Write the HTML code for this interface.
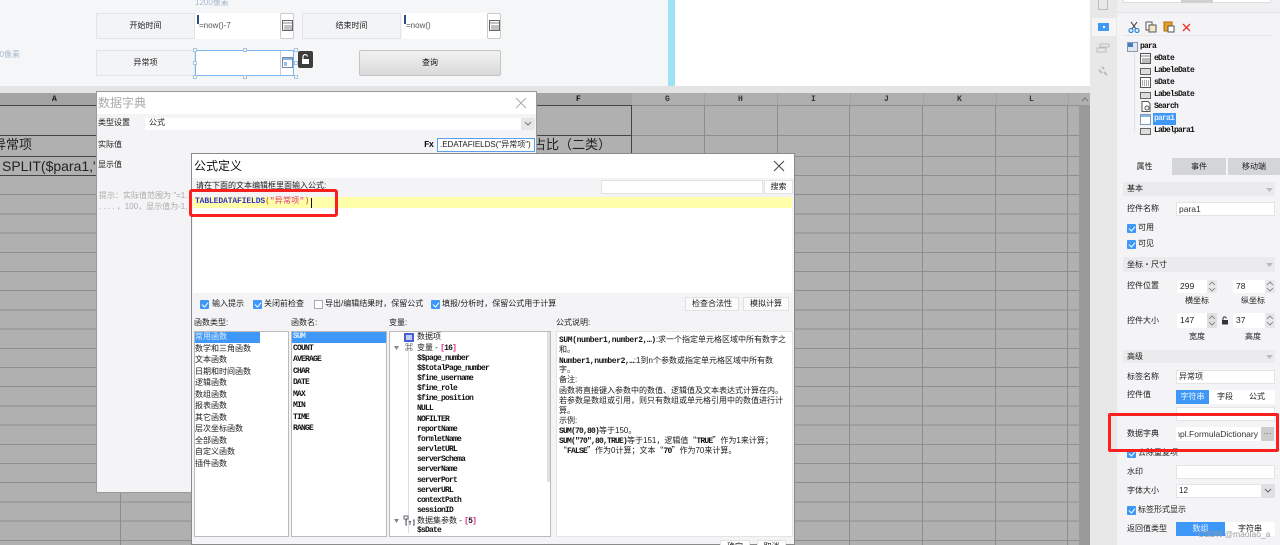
<!DOCTYPE html>
<html lang="zh-CN">
<head>
<meta charset="utf-8">
<title>公式定义</title>
<style>
*{box-sizing:border-box}
html,body{margin:0;padding:0;background:#fff}
#p{position:relative;width:1280px;height:545px;overflow:hidden;font-family:"Liberation Sans","Noto Sans CJK SC",sans-serif;font-size:8px;color:#1c1c1c;filter:blur(.3px)}
#p div,#p svg{position:absolute}
.t{position:absolute;white-space:nowrap;line-height:12px;height:12px}
.m{font-family:"Liberation Mono","Noto Sans CJK SC",monospace;letter-spacing:-.8px;color:#111;font-weight:bold}
.w{letter-spacing:-.4px}
.q{font-family:"Noto Sans CJK SC",sans-serif}
.b{background:#fff}
.lab{background:#f3f4f6;border:1px solid #e2e3e6;text-align:center;line-height:24px}
.sec{left:1123px;width:152px;background:#ebebed;padding-left:4px}
.inp{background:#fff;border:1px solid #e4e4e6;line-height:12px;padding-left:2px}
.cb{width:9px;height:9px;background:#3f98f7;border-radius:1px}
.cb:after{content:"";position:absolute;left:3px;top:1px;width:3px;height:5px;border:solid #fff;border-width:0 1px 1px 0;transform:rotate(40deg)}
.btn{background:#fbfbfb;border:1px solid #e2e2e2;text-align:center;line-height:12px}
.v{top:105px;width:1px;background:#8c8c8c;height:440px}
.hv{top:93px;width:1px;background:#a2a2a2;height:12px}
.h{left:0;height:1px;background:#444}
.lb{width:11px;height:7px;background:#ddd;border:1px solid #666}
</style>
</head>
<body>
<div id="p">
<!-- top design area -->
<div style="left:0;top:0;width:668px;height:86px;background:#f5f6f8"></div>
<div style="left:668px;top:0;width:7px;height:86px;background:#9de3f3"></div>
<div style="left:675px;top:0;width:415px;height:86px;background:#fff"></div>
<div style="left:0;top:86px;width:1090px;height:7px;background:#e4e4e4"></div>
<span class="t" style="left:195px;top:-3px;color:#a9bccd">1200像素</span>
<span class="t" style="left:-5px;top:49px;color:#a9bccd">80像素</span>

<div class="lab" style="left:96px;top:13px;width:99px;height:26px">开始时间</div>
<div class="b" style="left:195px;top:13px;width:85px;height:26px"></div>
<div style="left:197px;top:15px;width:2px;height:9px;background:#2b4f80"></div>
<span class="t" style="left:199px;top:20px;color:#555">=now()-7</span>
<div class="b" style="left:280px;top:13px;width:14px;height:26px;border:1px solid #ccc;border-radius:2px"></div>
<svg style="left:282px;top:20px" width="11" height="11" viewBox="0 0 11 11"><rect x=".5" y=".5" width="10" height="10" fill="#fff" stroke="#666"/><path d="M1 3h9M3 5v5M5 5v5M7 5v5M9 5v5" stroke="#666" stroke-width=".8"/></svg>

<div class="lab" style="left:302px;top:13px;width:99px;height:26px">结束时间</div>
<div class="b" style="left:402px;top:13px;width:85px;height:26px"></div>
<div style="left:404px;top:15px;width:2px;height:9px;background:#2b4f80"></div>
<span class="t" style="left:406px;top:20px;color:#555">=now()</span>
<div class="b" style="left:487px;top:13px;width:14px;height:26px;border:1px solid #ccc;border-radius:2px"></div>
<svg style="left:489px;top:20px" width="11" height="11" viewBox="0 0 11 11"><rect x=".5" y=".5" width="10" height="10" fill="#fff" stroke="#666"/><path d="M1 3h9M3 5v5M5 5v5M7 5v5M9 5v5" stroke="#666" stroke-width=".8"/></svg>

<div class="lab" style="left:96px;top:50px;width:99px;height:26px">异常项</div>
<div class="b" style="left:195px;top:50px;width:99px;height:26px;border:1px solid #7db7f0"></div>
<div style="left:280px;top:51px;width:1px;height:24px;background:#ccc"></div>
<svg style="left:282px;top:57px" width="11" height="11" viewBox="0 0 11 11"><rect x=".5" y=".5" width="10" height="10" fill="#fff" stroke="#6b8cb0"/><rect x="1" y="1" width="9" height="2" fill="#8db4dc"/><rect x="2" y="5" width="3" height="4" fill="#9fc0e0"/></svg>
<div style="left:193px;top:48px;width:4px;height:4px;background:#fff;border:1px solid #a9c4de"></div>
<div style="left:243px;top:48px;width:4px;height:4px;background:#fff;border:1px solid #a9c4de"></div>
<div style="left:294px;top:48px;width:4px;height:4px;background:#fff;border:1px solid #a9c4de"></div>
<div style="left:193px;top:61px;width:4px;height:4px;background:#fff;border:1px solid #a9c4de"></div>
<div style="left:294px;top:61px;width:4px;height:4px;background:#fff;border:1px solid #a9c4de"></div>
<div style="left:193px;top:75px;width:4px;height:4px;background:#fff;border:1px solid #a9c4de"></div>
<div style="left:243px;top:75px;width:4px;height:4px;background:#fff;border:1px solid #a9c4de"></div>
<div style="left:294px;top:75px;width:4px;height:4px;background:#fff;border:1px solid #a9c4de"></div>
<div style="left:298px;top:51px;width:15px;height:17px;background:#3d3d3d;border-radius:2px"></div>
<svg style="left:301px;top:54px" width="9" height="11" viewBox="0 0 9 11"><path d="M2 5V3a2.200 2.200 0 0 1 4.400-.4" fill="none" stroke="#fff" stroke-width="1.200"/><rect x="1" y="5" width="7" height="5" fill="#fff"/></svg>
<div style="left:359px;top:50px;width:142px;height:26px;background:linear-gradient(#f1f1f1,#d9d9d9);border:1px solid #c4c4c4;border-radius:2px;text-align:center;line-height:24px;color:#111">查询</div>

<!-- grid -->
<div style="left:0;top:93px;width:1079px;height:452px;background:#b0b0b0"></div>
<div style="left:0;top:93px;width:631px;height:12px;background:#a4a4a4"></div>
<div style="left:631px;top:93px;width:448px;height:12px;background:#aeaeae"></div>
<div style="left:0;top:175px;width:1079px;height:370px;background:repeating-linear-gradient(to bottom,#8e8e8e 0,#8e8e8e 1px,transparent 1px,transparent 19.2px)"></div>
<div style="left:631px;top:105px;width:448px;height:1px;background:#8e8e8e"></div>
<div style="left:631px;top:135px;width:448px;height:1px;background:#8e8e8e"></div>
<div style="left:631px;top:156px;width:448px;height:1px;background:#8e8e8e"></div>
<div class="h" style="top:105px;width:631px"></div>
<div class="h" style="top:135px;width:631px"></div>
<div class="h" style="top:156px;width:631px"></div>
<div class="h" style="top:175px;width:631px"></div>
<div style="left:631px;top:105px;width:1px;height:70px;background:#444"></div>
<div class="v" style="left:120px;top:175px;height:370px"></div>
<div class="v" style="left:704px"></div><div class="v" style="left:777px"></div><div class="v" style="left:849px"></div><div class="v" style="left:922px"></div><div class="v" style="left:995px"></div><div class="v" style="left:1067px"></div>
<div class="v" style="left:631px;top:175px;height:370px"></div>
<div class="hv" style="left:631px"></div><div class="hv" style="left:704px"></div><div class="hv" style="left:777px"></div><div class="hv" style="left:850px"></div><div class="hv" style="left:923px"></div><div class="hv" style="left:996px"></div><div class="hv" style="left:1068px"></div>
<span class="t m" style="left:52px;top:94px">A</span>
<span class="t m" style="left:576px;top:94px">F</span>
<span class="t m" style="left:665px;top:94px;color:#333">G</span>
<span class="t m" style="left:738px;top:94px;color:#333">H</span>
<span class="t m" style="left:811px;top:94px;color:#333">I</span>
<span class="t m" style="left:884px;top:94px;color:#333">J</span>
<span class="t m" style="left:957px;top:94px;color:#333">K</span>
<span class="t m" style="left:1029px;top:94px;color:#333">L</span>
<span class="t" style="left:-7px;top:139px;font-size:13px;color:#222">异常项</span>
<span class="t" style="left:2px;top:160px;font-size:14px;color:#222">SPLIT($para1,"</span>
<span class="t" style="left:533px;top:139px;font-size:13px;color:#222">占比（二类）</span>
<div style="left:1079px;top:105px;width:11px;height:440px;background:#9a9a9a"></div>
<div style="left:1079px;top:93px;width:11px;height:12px;background:#b0b0b0"></div>
<svg style="left:1081px;top:96px" width="8" height="6" viewBox="0 0 8 6"><path d="M1 5l3-3 3 3" fill="none" stroke="#777"/></svg>

<!-- data dictionary dialog -->
<div style="left:96px;top:91px;width:441px;height:402px;background:#f4f4f6;border:1px solid #9a9a9a"></div>
<div style="left:97px;top:92px;width:439px;height:22px;background:#fff"></div>
<span class="t" style="left:98px;top:97px;font-size:12px;color:#aaa">数据字典</span>
<svg style="left:515px;top:97px" width="12" height="12" viewBox="0 0 12 12"><path d="M1 1l10 10M11 1L1 11" stroke="#aaa" fill="none"/></svg>
<span class="t" style="left:98px;top:117px">类型设置</span>
<div class="b" style="left:145px;top:118px;width:390px;height:12px"></div>
<span class="t" style="left:149px;top:117px">公式</span>
<div style="left:521px;top:118px;width:14px;height:12px;background:#e6e6e6"></div>
<svg style="left:524px;top:121px" width="8" height="6" viewBox="0 0 8 6"><path d="M1 1l3 3 3-3" fill="none" stroke="#777"/></svg>
<span class="t" style="left:98px;top:139px">实际值</span>
<span class="t m" style="left:424px;top:139px;font-size:9px">Fx</span>
<div class="b" style="left:437px;top:138px;width:98px;height:14px;border:1px solid #5aa0ee;line-height:12px;padding-left:2px;overflow:hidden;white-space:nowrap">.EDATAFIELDS("异常项")</div>
<span class="t" style="left:98px;top:159px">显示值</span>
<span class="t" style="left:99px;top:190px;color:#aaa">提示：实际值范围为 "=1.</span>
<span class="t" style="left:99px;top:201px;color:#aaa">. . . . ，100，显示值为-1, -</span>

<!-- formula dialog -->
<div style="left:191px;top:153px;width:604px;height:392px;background:#f4f4f6;border:1px solid #8a8a8a"></div>
<div style="left:192px;top:154px;width:602px;height:24px;background:#fff"></div>
<span class="t" style="left:194px;top:160px;font-size:12px;color:#111">公式定义</span>
<svg style="left:773px;top:160px" width="12" height="12" viewBox="0 0 12 12"><path d="M1 1l10 10M11 1L1 11" stroke="#444" fill="none"/></svg>
<span class="t" style="left:196px;top:180px">请在下面的文本编辑框里面输入公式:</span>
<div class="b" style="left:601px;top:180px;width:162px;height:14px;border:1px solid #e2e2e2"></div>
<div class="btn" style="left:764px;top:180px;width:29px;height:14px;background:#fff">搜索</div>
<div class="b" style="left:193px;top:197px;width:599px;height:96px"></div>
<div style="left:193px;top:197px;width:599px;height:11px;background:#ffffaa"></div>
<span class="t" style="left:195px;top:196px;font-family:'Liberation Mono','Noto Sans CJK SC',monospace;font-weight:bold;letter-spacing:-.13px;color:#3030d0">TABLEDATAFIELDS<span style="color:#e08020">(</span><span style="color:#e6288c;font-weight:normal;letter-spacing:.25px">"异常项"</span><span style="color:#e08020">)</span></span>
<div style="left:311px;top:198px;width:1px;height:10px;background:#111"></div>

<div class="cb" style="left:200px;top:300px"></div><span class="t" style="left:212px;top:298px">输入提示</span>
<div class="cb" style="left:253px;top:300px"></div><span class="t" style="left:264px;top:298px">关闭前检查</span>
<div style="left:314px;top:300px;width:9px;height:9px;background:#fff;border:1px solid #aaa"></div><span class="t" style="left:325px;top:298px">导出/编辑结果时，保留公式</span>
<div class="cb" style="left:431px;top:300px"></div><span class="t" style="left:442px;top:298px">填报/分析时，保留公式用于计算</span>
<div class="btn" style="left:685px;top:297px;width:54px;height:14px">检查合法性</div>
<div class="btn" style="left:743px;top:297px;width:46px;height:14px">模拟计算</div>

<span class="t" style="left:194px;top:317px">函数类型:</span>
<span class="t" style="left:291px;top:317px">函数名:</span>
<span class="t" style="left:389px;top:317px">变量:</span>
<span class="t" style="left:556px;top:317px">公式说明:</span>

<div class="b" style="left:194px;top:331px;width:95px;height:206px;border:1px solid #bbb"></div>
<div style="left:195px;top:332px;width:65px;height:11px;background:#3f98f7"></div>
<span class="t" style="left:195px;top:331px;color:#dfeeff">常用函数</span>
<span class="t" style="left:195px;top:342.500px">数学和三角函数</span>
<span class="t" style="left:195px;top:354px">文本函数</span>
<span class="t" style="left:195px;top:365.500px">日期和时间函数</span>
<span class="t" style="left:195px;top:377px">逻辑函数</span>
<span class="t" style="left:195px;top:388.500px">数组函数</span>
<span class="t" style="left:195px;top:400px">报表函数</span>
<span class="t" style="left:195px;top:411.500px">其它函数</span>
<span class="t" style="left:195px;top:423px">层次坐标函数</span>
<span class="t" style="left:195px;top:434.500px">全部函数</span>
<span class="t" style="left:195px;top:446px">自定义函数</span>
<span class="t" style="left:195px;top:457.500px">插件函数</span>

<div class="b" style="left:291px;top:331px;width:96px;height:206px;border:1px solid #bbb"></div>
<div style="left:292px;top:332px;width:94px;height:11px;background:#3f98f7"></div>
<span class="t m" style="left:293px;top:331px;color:#dfeeff">SUM</span>
<span class="t m" style="left:293px;top:342.500px">COUNT</span>
<span class="t m" style="left:293px;top:354px">AVERAGE</span>
<span class="t m" style="left:293px;top:365.500px">CHAR</span>
<span class="t m" style="left:293px;top:377px">DATE</span>
<span class="t m" style="left:293px;top:388.500px">MAX</span>
<span class="t m" style="left:293px;top:400px">MIN</span>
<span class="t m" style="left:293px;top:411.500px">TIME</span>
<span class="t m" style="left:293px;top:423px">RANGE</span>

<div class="b" style="left:389px;top:331px;width:162px;height:206px;border:1px solid #bbb"></div>
<div style="left:547px;top:332px;width:3px;height:150px;background:#e0e0e0"></div>
<div style="left:408px;top:338px;width:1px;height:195px;background:#ddd"></div>
<div style="left:404px;top:333px;width:10px;height:9px;background:#c6cdf2;border:2px solid #4a5fd0"></div>
<span class="t" style="left:417px;top:331px">数据项</span>
<svg style="left:393px;top:345px" width="7" height="6" viewBox="0 0 7 6"><path d="M1 1h5L3.500 5z" fill="#888"/></svg>
<span class="t" style="left:405px;top:342px;font-weight:bold;color:#222">⌘</span>
<span class="t" style="left:417px;top:342px">变量 - <span class="m" style="color:#e6288c">[</span><span class="m">16</span><span class="m" style="color:#e6288c">]</span></span>
<span class="t m" style="left:417px;top:352.500px">$$page_number</span>
<span class="t m" style="left:417px;top:362.700px">$$totalPage_number</span>
<span class="t m" style="left:417px;top:372.900px">$fine_username</span>
<span class="t m" style="left:417px;top:383px">$fine_role</span>
<span class="t m" style="left:417px;top:393.200px">$fine_position</span>
<span class="t m" style="left:417px;top:403.400px">NULL</span>
<span class="t m" style="left:417px;top:413.600px">NOFILTER</span>
<span class="t m" style="left:417px;top:423.700px">reportName</span>
<span class="t m" style="left:417px;top:433.900px">formletName</span>
<span class="t m" style="left:417px;top:444px">servletURL</span>
<span class="t m" style="left:417px;top:454.200px">serverSchema</span>
<span class="t m" style="left:417px;top:464.400px">serverName</span>
<span class="t m" style="left:417px;top:474.500px">serverPort</span>
<span class="t m" style="left:417px;top:484.700px">serverURL</span>
<span class="t m" style="left:417px;top:494.800px">contextPath</span>
<span class="t m" style="left:417px;top:505px">sessionID</span>
<svg style="left:393px;top:518px" width="7" height="6" viewBox="0 0 7 6"><path d="M1 1h5L3.500 5z" fill="#888"/></svg>
<svg style="left:403px;top:515px" width="12" height="11" viewBox="0 0 12 11"><rect x="1" y="1" width="4" height="3" fill="none" stroke="#667"/><path d="M4 5h-1v5h1M10 5h1v5h-1" fill="none" stroke="#445"/><path d="M6 6l1 1.500L8 6M7 7.500V10" fill="none" stroke="#445" stroke-width=".8"/></svg>
<span class="t" style="left:417px;top:515px">数据集参数 - <span class="m" style="color:#e6288c">[</span><span class="m">5</span><span class="m" style="color:#e6288c">]</span></span>
<span class="t m" style="left:417px;top:525px">$sDate</span>

<div class="b" style="left:556px;top:331px;width:237px;height:206px;border:1px solid #e4e4e6"></div>
<span class="t" style="left:559px;top:334px"><span class="m w">SUM(number1,number2,…)</span>:求一个指定单元格区域中所有数字之</span>
<span class="t" style="left:559px;top:344px">和。</span>
<span class="t" style="left:559px;top:354.500px"><span class="m w">Number1,number2,…</span>:1到n个参数或指定单元格区域中所有数</span>
<span class="t" style="left:559px;top:364px">字。</span>
<span class="t" style="left:559px;top:374px">备注:</span>
<span class="t" style="left:559px;top:385px">函数将直接键入参数中的数值、逻辑值及文本表达式计算在内。</span>
<span class="t" style="left:559px;top:395px">若参数是数组或引用，则只有数组或单元格引用中的数值进行计</span>
<span class="t" style="left:559px;top:405px">算。</span>
<span class="t" style="left:559px;top:415px">示例:</span>
<span class="t" style="left:559px;top:425px"><span class="m">SUM(70,80)</span>等于150。</span>
<span class="t" style="left:559px;top:435px"><span class="m">SUM("70",80,TRUE)</span>等于151，逻辑值<span class="q">“</span><span class="m">TRUE</span><span class="q">”</span>作为1来计算；</span>
<span class="t" style="left:559px;top:445px"><span class="q">“</span><span class="m">FALSE</span><span class="q">”</span>作为0计算；文本<span class="q">“</span><span class="m">70</span><span class="q">”</span>作为70来计算。</span>
<div class="btn" style="left:720px;top:540px;width:30px;height:14px;background:#fff">确定</div>
<div class="btn" style="left:757px;top:540px;width:29px;height:14px;background:#fff">取消</div>

<!-- right rail and panel -->
<div style="left:1090px;top:0;width:27px;height:545px;background:#e8e8e8"></div>
<div style="left:1092px;top:18px;width:24px;height:18px;background:#f5f5f8"></div>
<div style="left:1098px;top:23px;width:11px;height:8px;background:#3f98f7"></div>
<div style="left:1102.500px;top:26px;width:2px;height:2px;background:#fff"></div>
<div style="left:1098px;top:0;width:10px;height:10px;border:1px solid #bbb;border-top:0"></div>
<svg style="left:1096px;top:43px" width="14" height="10" viewBox="0 0 14 10"><rect x="4" y="1" width="9" height="3" fill="none" stroke="#bbb"/><rect x="1" y="5" width="9" height="4" fill="none" stroke="#bbb"/></svg>
<svg style="left:1097px;top:65px" width="12" height="12" viewBox="0 0 12 12"><path d="M2 5l3 3M7 7l3 3M5 2l2 2" stroke="#bbb" stroke-width="2" fill="none"/></svg>
<div style="left:1117px;top:0;width:163px;height:545px;background:#f4f4f6"></div>
<div style="left:1117px;top:0;width:163px;height:13px;background:#f0f0f2;border-bottom:1px solid #e2e2e0"></div>
<div class="b" style="left:1123px;top:0;width:148px;height:3px;border:1px solid #ddd;border-top:0"></div>
<div style="left:1181px;top:0;width:32px;height:3px;background:#d0d0d0"></div>
<div style="left:1123px;top:35px;width:150px;height:1px;background:#e8e8ea"></div>
<svg style="left:1128px;top:21px" width="12" height="12" viewBox="0 0 12 12"><path d="M3 1l5 7M9 1L4 8" stroke="#333" fill="none"/><circle cx="3" cy="9.500" r="2" fill="none" stroke="#2e86d8" stroke-width="1.200"/><circle cx="9" cy="9.500" r="2" fill="none" stroke="#2e86d8" stroke-width="1.200"/></svg>
<svg style="left:1145px;top:21px" width="12" height="12" viewBox="0 0 12 12"><rect x="1" y="1" width="6" height="8" fill="#fff" stroke="#555"/><rect x="4" y="4" width="7" height="7" fill="#f0e6c8" stroke="#555"/></svg>
<svg style="left:1163px;top:21px" width="12" height="12" viewBox="0 0 12 12"><rect x="1" y="1" width="8" height="9" fill="#e8a020" stroke="#a87010"/><rect x="5" y="5" width="6" height="6" fill="#fff" stroke="#555"/></svg>
<svg style="left:1182px;top:23px" width="9" height="9" viewBox="0 0 9 9"><path d="M1 1l7 7M8 1L1 8" stroke="#ee3030" stroke-width="1.300"/></svg>
<div style="left:1127px;top:42px;width:11px;height:10px;background:#dfe6ee;border:1px solid #8a9aaa"></div>
<div style="left:1128px;top:43px;width:5px;height:4px;background:#3f7fc8"></div>
<span class="t m" style="left:1140px;top:41px">para</span>
<div style="left:1134px;top:52px;width:1px;height:80px;background:#e0e0e0"></div>
<svg style="left:1140px;top:53px" width="11" height="11" viewBox="0 0 11 11"><rect x=".5" y=".5" width="10" height="10" fill="#fff" stroke="#555"/><path d="M1 3h9M3 5v5M5 5v5M7 5v5M9 5v5" stroke="#555" stroke-width=".8"/></svg>
<span class="t m" style="left:1154px;top:53px">eDate</span>
<div class="lb" style="left:1140px;top:68px"></div>
<span class="t m" style="left:1154px;top:65px">LabeleDate</span>
<svg style="left:1140px;top:77px" width="11" height="11" viewBox="0 0 11 11"><rect x=".5" y=".5" width="10" height="10" fill="#fff" stroke="#555"/><path d="M2 4h7M2 6h7M2 8h7" stroke="#555" stroke-dasharray="1 1"/></svg>
<span class="t m" style="left:1154px;top:77px">sDate</span>
<div class="lb" style="left:1140px;top:92px"></div>
<span class="t m" style="left:1154px;top:89px">LabelsDate</span>
<svg style="left:1141px;top:101px" width="11" height="11" viewBox="0 0 11 11"><path d="M1 .5h6l2 2v8H1z" fill="#fff" stroke="#555"/><circle cx="6" cy="7" r="2" fill="none" stroke="#555"/></svg>
<span class="t m" style="left:1154px;top:101px">Search</span>
<div style="left:1140px;top:114px;width:11px;height:11px;background:#fff;border:1px solid #7c9cc0"></div>
<div style="left:1141px;top:115px;width:9px;height:2px;background:#8db4dc"></div>
<div style="left:1153px;top:113px;width:23px;height:12px;background:#3f98f7"></div>
<span class="t m" style="left:1154px;top:113px;color:#dfeeff">para1</span>
<div class="lb" style="left:1140px;top:128px"></div>
<span class="t m" style="left:1154px;top:125px">Labelpara1</span>

<div style="left:1172px;top:158px;width:54px;height:17px;background:#d4d5d8;text-align:center;line-height:17px">事件</div>
<div style="left:1228px;top:158px;width:52px;height:17px;background:#d4d5d8;text-align:center;line-height:17px">移动端</div>
<div style="left:1117px;top:158px;width:55px;height:17px;background:#f4f4f6;text-align:center;line-height:17px">属性</div>

<div class="sec" style="top:182px;height:14px;line-height:14px">基本</div>
<svg style="left:1266px;top:188px" width="7" height="4" viewBox="0 0 7 4"><path d="M0 0h7L3.500 4z" fill="#bbb"/></svg>
<span class="t" style="left:1127px;top:203px">控件名称</span>
<div class="inp" style="left:1176px;top:202px;width:99px;height:14px;color:#333;font-size:8.500px">para1</div>
<div class="cb" style="left:1127px;top:224px"></div><span class="t" style="left:1138px;top:222px">可用</span>
<div class="cb" style="left:1127px;top:240px"></div><span class="t" style="left:1138px;top:238px">可见</span>
<div class="sec" style="top:257px;height:15px;line-height:15px">坐标・尺寸</div>
<svg style="left:1266px;top:263px" width="7" height="4" viewBox="0 0 7 4"><path d="M0 0h7L3.500 4z" fill="#bbb"/></svg>
<span class="t" style="left:1127px;top:280px">控件位置</span>
<div class="inp" style="left:1177px;top:280px;width:40px;height:13px;border:0;padding-left:3px;font-size:8.500px">299</div>
<div style="left:1207px;top:280px;width:10px;height:13px;background:#e8e8ea"></div>
<svg style="left:1208px;top:281px" width="8" height="11" viewBox="0 0 8 11"><path d="M1 4l3-3 3 3M1 7l3 3 3-3" fill="none" stroke="#777" stroke-width=".8"/></svg>
<div class="inp" style="left:1233px;top:280px;width:42px;height:13px;border:0;padding-left:3px;font-size:8.500px">78</div>
<div style="left:1265px;top:280px;width:10px;height:13px;background:#e8e8ea"></div>
<svg style="left:1266px;top:281px" width="8" height="11" viewBox="0 0 8 11"><path d="M1 4l3-3 3 3M1 7l3 3 3-3" fill="none" stroke="#777" stroke-width=".8"/></svg>
<span class="t" style="left:1185px;top:295px">横坐标</span>
<span class="t" style="left:1241px;top:295px">纵坐标</span>
<span class="t" style="left:1127px;top:315px">控件大小</span>
<div class="inp" style="left:1177px;top:313px;width:40px;height:15px;border:0;padding:1px 0 0 3px;font-size:8.500px">147</div>
<div style="left:1207px;top:313px;width:10px;height:15px;background:#e0e0e2"></div>
<svg style="left:1208px;top:315px" width="8" height="11" viewBox="0 0 8 11"><path d="M1 4l3-3 3 3M1 7l3 3 3-3" fill="none" stroke="#777" stroke-width=".8"/></svg>
<svg style="left:1221px;top:316px" width="8" height="9" viewBox="0 0 8 9"><path d="M2 4V2.500a1.600 1.600 0 0 1 3.200 0" fill="none" stroke="#333"/><rect x="1" y="4" width="6" height="4.500" fill="#333"/></svg>
<div class="inp" style="left:1233px;top:313px;width:42px;height:15px;border:0;padding:1px 0 0 3px;font-size:8.500px">37</div>
<div style="left:1265px;top:313px;width:10px;height:15px;background:#e8e8ea"></div>
<svg style="left:1266px;top:315px" width="8" height="11" viewBox="0 0 8 11"><path d="M1 4l3-3 3 3M1 7l3 3 3-3" fill="none" stroke="#777" stroke-width=".8"/></svg>
<span class="t" style="left:1189px;top:331px">宽度</span>
<span class="t" style="left:1245px;top:331px">高度</span>
<div class="sec" style="top:350px;height:13px;line-height:13px">高级</div>
<svg style="left:1266px;top:355px" width="7" height="4" viewBox="0 0 7 4"><path d="M0 0h7L3.500 4z" fill="#bbb"/></svg>
<span class="t" style="left:1127px;top:371px">标签名称</span>
<div class="inp" style="left:1176px;top:370px;width:99px;height:14px">异常项</div>
<span class="t" style="left:1127px;top:389px">控件值</span>
<div class="b" style="left:1176px;top:390px;width:99px;height:14px"></div>
<div style="left:1176px;top:390px;width:33px;height:14px;background:#3f98f7;color:#e6f2ff;text-align:center;line-height:14px">字符串</div>
<span class="t" style="left:1217px;top:391px">字段</span>
<span class="t" style="left:1249px;top:391px">公式</span>
<div class="inp" style="left:1176px;top:407px;width:99px;height:14px"></div>
<span class="t" style="left:1127px;top:428px">数据字典</span>
<div class="b" style="left:1176px;top:427px;width:85px;height:14px"></div>
<div style="left:1178px;top:427px;width:80px;height:14px;overflow:hidden;white-space:nowrap;direction:rtl;text-align:left;line-height:14px;font-size:8.500px;color:#333"><bdo dir="ltr">mpl.FormulaDictionary</bdo></div>
<div style="left:1261px;top:427px;width:13px;height:14px;background:#ccc;text-align:center;line-height:13px;color:#555">···</div>
<div class="cb" style="left:1127px;top:449px"></div><span class="t" style="left:1138px;top:447px">去除重复项</span>
<span class="t" style="left:1127px;top:466px">水印</span>
<div class="inp" style="left:1176px;top:465px;width:99px;height:14px"></div>
<span class="t" style="left:1127px;top:485px">字体大小</span>
<div class="inp" style="left:1176px;top:484px;width:99px;height:14px">12</div>
<div style="left:1261px;top:484px;width:14px;height:14px;background:#e0e0e2"></div>
<svg style="left:1264px;top:488px" width="8" height="6" viewBox="0 0 8 6"><path d="M1 1l3 3 3-3" fill="none" stroke="#666"/></svg>
<div class="cb" style="left:1127px;top:506px"></div><span class="t" style="left:1138px;top:504px">标签形式显示</span>
<span class="t" style="left:1127px;top:523px">返回值类型</span>
<div class="b" style="left:1176px;top:522px;width:99px;height:14px"></div>
<div style="left:1176px;top:522px;width:49px;height:14px;background:#3f98f7;color:#e6f2ff;text-align:center;line-height:14px">数组</div>
<span class="t" style="left:1238px;top:523px">字符串</span>
<span class="t" style="left:1198px;top:528px;font-size:8.500px;color:#999">CSDN @maolao_a</span>

<!-- red highlight boxes -->
<div style="left:189px;top:189px;width:149px;height:28px;border:3px solid #fb2020;border-radius:3px"></div>
<div style="left:1108px;top:413px;width:171px;height:39px;border:3px solid #fb2020;border-radius:2px"></div>
</div>
</body>
</html>
